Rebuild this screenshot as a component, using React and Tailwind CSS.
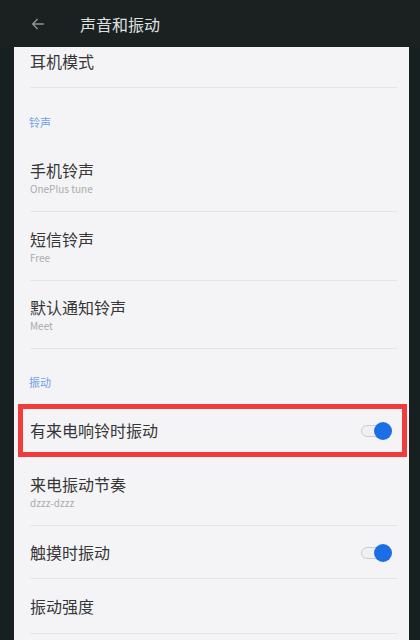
import React from 'react';

const font = { fontFamily: '"Noto Sans CJK SC", "Noto Sans", sans-serif' };

function Toggle() {
  return (
    <div className="relative h-[18px] w-[31px]">
      <div className="absolute left-0 top-[3px] h-[12px] w-[24px] rounded-full border border-[#c9ccd2] bg-[#eef0f3]" />
      <div className="absolute right-0 top-0 h-[18px] w-[18px] rounded-full bg-[#1a6fe6]" />
    </div>
  );
}

function Section({ title, className = '' }) {
  return (
    <div className={`pl-[15px] text-[11px] leading-[16px] text-[#6f9ee6] ${className}`}>{title}</div>
  );
}

function Row({ title, sub, toggle, divider = true, className = '', children }) {
  return (
    <div className={`relative ${className}`}>
      <div className="flex h-full items-center pl-[16px] pr-[17px]">
        <div className="flex-1">
          <div className="text-[16px] leading-[21px] text-[#363636]">{title}</div>
          {sub && <div className="text-[10px] leading-[15px] text-[#ababab]">{sub}</div>}
        </div>
        {toggle && <Toggle />}
      </div>
      {divider && <div className="absolute bottom-0 left-[16px] right-[12px] h-px bg-[#e4e4e6]" />}
      {children}
    </div>
  );
}

export default function App() {
  return (
    <div className="flex h-[640px] w-[420px] flex-col overflow-hidden bg-[#162021]" style={font}>
      {/* toolbar */}
      <div className="flex h-[47px] shrink-0 items-center bg-[#1b2021]">
        <svg className="ml-[30px] h-[16px] w-[16px]" viewBox="0 0 24 24" fill="none" stroke="#8e9496" strokeWidth="2" strokeLinecap="round" strokeLinejoin="round">
          <path d="M20 12H4M11 5l-7 7 7 7" />
        </svg>
        <div className="ml-[34px] text-[16px] font-normal text-[#dfe1e1]">声音和振动</div>
      </div>

      <div className="ml-[14px] mr-[11px] flex-1 bg-[#f4f4f6]">
        {/* list is scrolled, the first row is partly under the toolbar */}
        <Row title="耳机模式" className="h-[41px] pb-[13px]" />
        <Section title="铃声" className="pt-[26px] pb-[13px]" />
        <Row title="手机铃声" sub="OnePlus tune" className="h-[69px]" />
        <Row title="短信铃声" sub="Free" className="h-[69px]" />
        <Row title="默认通知铃声" sub="Meet" className="h-[68px]" />
        <Section title="振动" className="pt-[25px] pb-[13px]" />
        <Row title="有来电响铃时振动" toggle divider={false} className="h-[55px]">
          <div className="pointer-events-none absolute left-[4px] right-[2px] top-[1px] bottom-[1px] border-[5px] border-[#f43b3b]" />
        </Row>
        <Row title="来电振动节奏" sub="dzzz-dzzz" className="h-[68px]" />
        <Row title="触摸时振动" toggle className="h-[53px]" />
        <Row title="振动强度" className="h-[55px]" />
      </div>
    </div>
  );
}
